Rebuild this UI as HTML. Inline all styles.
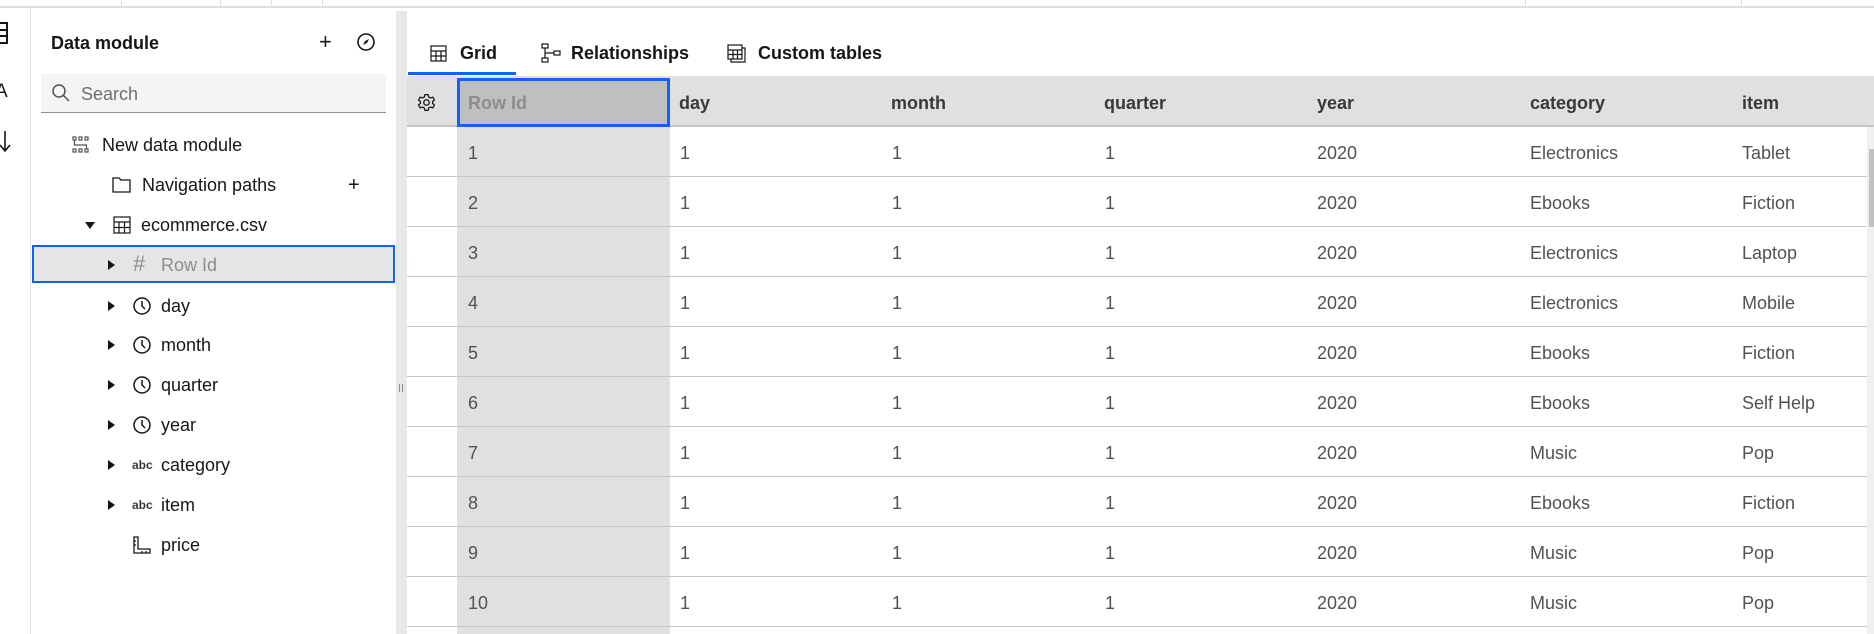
<!DOCTYPE html>
<html><head><meta charset="utf-8"><style>
*{box-sizing:border-box;margin:0;padding:0}
body{width:1874px;height:634px;overflow:hidden;background:#fff;font-family:"Liberation Sans",sans-serif;color:#161616;position:relative}
.a{position:absolute}
.t{position:absolute;font-size:18px;line-height:20px;white-space:nowrap}
.cell{position:absolute;font-size:18px;color:#525252;line-height:20px}
.hd{position:absolute;font-size:18px;font-weight:bold;color:#393939;line-height:20px}
.caret{position:absolute;width:0;height:0;border-top:5px solid transparent;border-bottom:5px solid transparent;border-left:7px solid #161616}
</style></head><body>
<!-- top bar -->
<div class="a" style="left:0;top:6px;width:1874px;height:2px;background:#e0e0e0"></div>
<div class="a" style="left:121px;top:0;width:1px;height:6px;background:#e0e0e0"></div>
<div class="a" style="left:220px;top:0;width:1px;height:6px;background:#e0e0e0"></div>
<div class="a" style="left:271px;top:0;width:1px;height:6px;background:#e0e0e0"></div>
<div class="a" style="left:322px;top:0;width:1px;height:6px;background:#e0e0e0"></div>
<div class="a" style="left:1525px;top:0;width:1px;height:6px;background:#e0e0e0"></div>
<div class="a" style="left:1741px;top:0;width:1px;height:6px;background:#e0e0e0"></div>
<!-- left strip -->
<div class="a" style="left:30px;top:8px;width:1px;height:626px;background:#e0e0e0"></div>
<svg class="a" style="left:0;top:22px" width="10" height="24" viewBox="0 0 10 24"><path d="M-2 1H7V21H-2M-2 8H7M-2 14H7" fill="none" stroke="#161616" stroke-width="2"/></svg>
<div class="t" style="left:-5px;top:82px;font-size:19px">A</div>
<svg class="a" style="left:0;top:130px" width="12" height="24" viewBox="0 0 12 24"><path d="M5 1V21M0 15L5 21L10 15" fill="none" stroke="#161616" stroke-width="1.6"/></svg>
<!-- sidebar -->
<div class="t" style="left:51px;top:33px;font-weight:bold;font-size:18px">Data module</div>
<div class="t" style="left:319px;top:32px;font-size:22px">+</div>
<svg class="a" style="left:356px;top:32px" width="20" height="20" viewBox="0 0 20 20"><circle cx="10" cy="10" r="8" fill="none" stroke="#161616" stroke-width="1.6"/><path d="M7 13L9 9L13 7L11 11Z" fill="#161616"/></svg>
<div class="a" style="left:41px;top:74px;width:345px;height:39px;background:#f4f4f4;border-bottom:1px solid #8d8d8d"></div>
<svg class="a" style="left:51px;top:83px" width="20" height="20" viewBox="0 0 20 20"><circle cx="8" cy="8" r="6" fill="none" stroke="#525252" stroke-width="1.5"/><path d="M12.5 12.5L18 18" stroke="#525252" stroke-width="1.5"/></svg>
<div class="t" style="left:81px;top:84px;color:#6f6f6f">Search</div>
<svg class="a" style="left:72px;top:136px" width="18" height="18" viewBox="0 0 18 18" fill="none" stroke="#525252" stroke-width="1.2"><rect x="1" y="1" width="3" height="3"/><rect x="7" y="1" width="3" height="3"/><rect x="13" y="1" width="3" height="3"/><rect x="1" y="13" width="3" height="3"/><rect x="7" y="13" width="3" height="3"/><rect x="13" y="13" width="3" height="3"/><path d="M2.5 4V9H14.5V13"/></svg>
<div class="t" style="left:102px;top:135px">New data module</div>
<svg class="a" style="left:112px;top:176px" width="19" height="17" viewBox="0 0 19 17"><path d="M1 2H7L9 4H18V16H1Z" fill="none" stroke="#161616" stroke-width="1.3"/></svg>
<div class="t" style="left:142px;top:175px">Navigation paths</div>
<div class="t" style="left:348px;top:175px;font-size:20px">+</div>
<div class="caret" style="left:85px;top:222px;border-left:5px solid transparent;border-right:5px solid transparent;border-top:7px solid #161616;border-bottom:0"></div>
<svg class="a" style="left:113px;top:216px" width="18" height="18" viewBox="0 0 18 18" fill="none" stroke="#161616" stroke-width="1.2"><rect x="1" y="1" width="16" height="16"/><path d="M1 6H17M1 11.5H17M6 6V17M11.5 6V17"/></svg>
<div class="t" style="left:141px;top:215px">ecommerce.csv</div>
<div class="a" style="left:32px;top:245px;width:363px;height:38px;background:#e5e5e5;border:2px solid #0f62fe"></div>
<div class="caret" style="left:108px;top:260px"></div>
<div class="t" style="left:133px;top:254px;color:#8d8d8d;font-size:22px">#</div>
<div class="t" style="left:161px;top:255px;color:#8d8d8d">Row Id</div>
<!-- field rows -->
<div class="caret" style="left:108px;top:301px"></div><svg class="a" style="left:132px;top:296px" width="20" height="20" viewBox="0 0 20 20"><circle cx="10" cy="10" r="8" fill="none" stroke="#161616" stroke-width="1.5"/><path d="M10 5V10L13 13" fill="none" stroke="#161616" stroke-width="1.5"/></svg><div class="t" style="left:161px;top:296px">day</div>
<div class="caret" style="left:108px;top:340px"></div><svg class="a" style="left:132px;top:335px" width="20" height="20" viewBox="0 0 20 20"><circle cx="10" cy="10" r="8" fill="none" stroke="#161616" stroke-width="1.5"/><path d="M10 5V10L13 13" fill="none" stroke="#161616" stroke-width="1.5"/></svg><div class="t" style="left:161px;top:335px">month</div>
<div class="caret" style="left:108px;top:380px"></div><svg class="a" style="left:132px;top:375px" width="20" height="20" viewBox="0 0 20 20"><circle cx="10" cy="10" r="8" fill="none" stroke="#161616" stroke-width="1.5"/><path d="M10 5V10L13 13" fill="none" stroke="#161616" stroke-width="1.5"/></svg><div class="t" style="left:161px;top:375px">quarter</div>
<div class="caret" style="left:108px;top:420px"></div><svg class="a" style="left:132px;top:415px" width="20" height="20" viewBox="0 0 20 20"><circle cx="10" cy="10" r="8" fill="none" stroke="#161616" stroke-width="1.5"/><path d="M10 5V10L13 13" fill="none" stroke="#161616" stroke-width="1.5"/></svg><div class="t" style="left:161px;top:415px">year</div>
<div class="caret" style="left:108px;top:460px"></div><div class="t" style="left:132px;top:455px;font-size:12px;font-weight:bold;color:#393939">abc</div><div class="t" style="left:161px;top:455px">category</div>
<div class="caret" style="left:108px;top:500px"></div><div class="t" style="left:132px;top:495px;font-size:12px;font-weight:bold;color:#393939">abc</div><div class="t" style="left:161px;top:495px">item</div>
<svg class="a" style="left:133px;top:536px" width="18" height="18" viewBox="0 0 18 18" fill="none" stroke="#161616" stroke-width="1.3"><path d="M1 1H5V13H17V17H1Z"/><path d="M1 5H3M1 9H3M9 17V15M13 17V15"/></svg><div class="t" style="left:161px;top:535px">price</div>
<!-- splitter -->
<div class="a" style="left:396px;top:11px;width:11px;height:623px;background:#e8e8e8"></div>
<div class="a" style="left:399px;top:384px;width:1px;height:8px;background:#8d8d8d"></div><div class="a" style="left:402px;top:384px;width:1px;height:8px;background:#8d8d8d"></div>
<!-- tabs -->
<svg class="a" style="left:430px;top:45px" width="17" height="17" viewBox="0 0 17 17" fill="none" stroke="#161616" stroke-width="1.2"><rect x="1" y="1" width="15" height="15"/><path d="M1 6H16M1 11H16M6 6V16M11 6V16"/></svg>
<div class="t" style="left:460px;top:43px;font-weight:bold">Grid</div>
<div class="a" style="left:408px;top:72px;width:108px;height:3px;background:#0f62fe"></div>
<svg class="a" style="left:541px;top:43px" width="20" height="20" viewBox="0 0 20 20" fill="none" stroke="#161616" stroke-width="1.2"><rect x="1" y="1" width="6" height="4"/><rect x="13" y="8" width="6" height="4"/><rect x="1" y="15" width="6" height="4"/><path d="M4 5V10H13M4 15V10"/></svg>
<div class="t" style="left:571px;top:43px;font-weight:bold">Relationships</div>
<svg class="a" style="left:727px;top:44px" width="19" height="19" viewBox="0 0 19 19" fill="none" stroke="#161616" stroke-width="1.2"><rect x="1" y="1" width="14" height="14"/><path d="M1 6H15M1 10.5H15M6 6V15M10.5 6V15M15 4H18V18H4V15"/></svg>
<div class="t" style="left:758px;top:43px;font-weight:bold">Custom tables</div>
<!-- grid -->
<div class="a" style="left:407px;top:76px;width:1467px;height:51px;background:#e0e0e0;border-bottom:2px solid #c6c6c6"></div>
<svg class="a" style="left:417px;top:93px" width="19" height="19" viewBox="0 0 24 24" fill="none" stroke="#161616" stroke-width="1.6"><circle cx="12" cy="12" r="3.5"/><path d="M10 2h4l.7 3 2.3 1.3 3-1 2 3.5-2.3 2v2.4l2.3 2-2 3.5-3-1-2.3 1.3-.7 3h-4l-.7-3-2.3-1.3-3 1-2-3.5 2.3-2v-2.4l-2.3-2 2-3.5 3 1 2.3-1.3z"/></svg>
<div class="a" style="left:457px;top:127px;width:213px;height:507px;background:#e0e0e0"></div>
<div class="a" style="left:457px;top:78px;width:213px;height:49px;background:#bfbfbf;border:3px solid #0f62fe"></div>
<div class="hd" style="left:468px;top:93px;color:#8d8d8d">Row Id</div>
<div class="hd" style="left:679px;top:93px">day</div>
<div class="hd" style="left:891px;top:93px">month</div>
<div class="hd" style="left:1104px;top:93px">quarter</div>
<div class="hd" style="left:1317px;top:93px">year</div>
<div class="hd" style="left:1530px;top:93px">category</div>
<div class="hd" style="left:1742px;top:93px">item</div>
<div id="rows"></div>
<script>
var d=[["Electronics","Tablet"],["Ebooks","Fiction"],["Electronics","Laptop"],["Electronics","Mobile"],["Ebooks","Fiction"],["Ebooks","Self Help"],["Music","Pop"],["Ebooks","Fiction"],["Music","Pop"],["Music","Pop"]];
var h="";
for(var i=0;i<10;i++){var y=127+i*50;var ty=y+16;
h+='<div class="a" style="left:407px;top:'+(y+49)+'px;width:1460px;height:1px;background:#c6c6c6"></div>';
h+='<div class="cell" style="left:468px;top:'+ty+'px">'+(i+1)+'</div>';
h+='<div class="cell" style="left:680px;top:'+ty+'px">1</div><div class="cell" style="left:892px;top:'+ty+'px">1</div><div class="cell" style="left:1105px;top:'+ty+'px">1</div><div class="cell" style="left:1317px;top:'+ty+'px">2020</div>';
h+='<div class="cell" style="left:1530px;top:'+ty+'px">'+d[i][0]+'</div><div class="cell" style="left:1742px;top:'+ty+'px">'+d[i][1]+'</div>';}
document.getElementById("rows").innerHTML=h;
</script>
<div class="a" style="left:1867px;top:127px;width:7px;height:507px;background:#f0f0f0"></div>
<div class="a" style="left:1869px;top:149px;width:5px;height:78px;background:#c1c1c1"></div>
</body></html>
